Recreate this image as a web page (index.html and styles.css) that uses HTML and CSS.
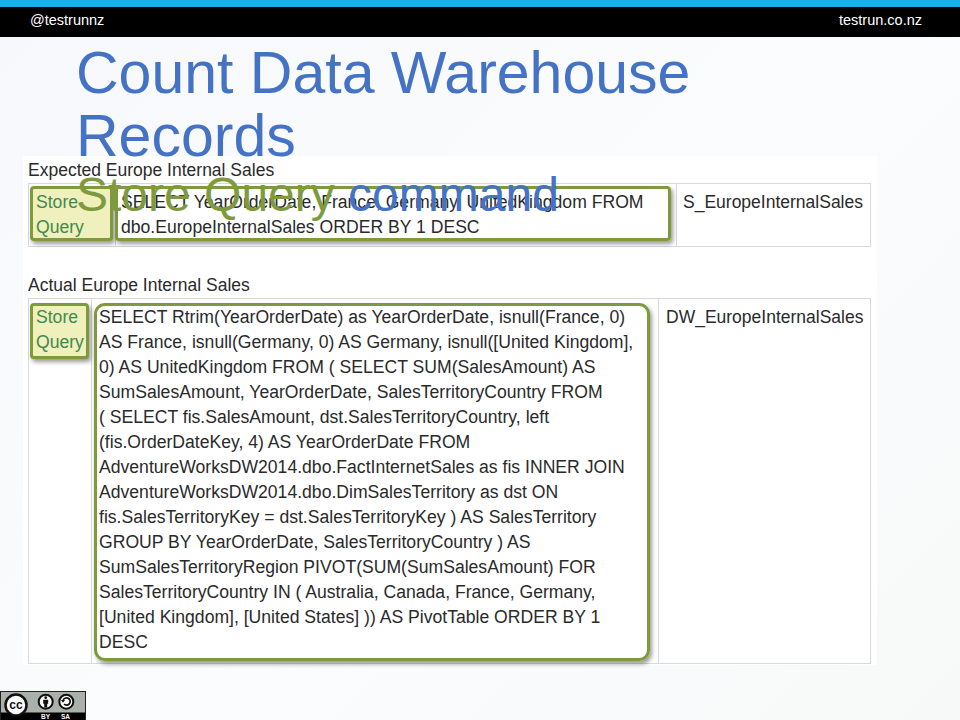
FILE: index.html
```html
<!DOCTYPE html>
<html lang="en">
<head>
<meta charset="utf-8">
<title>Count Data Warehouse Records</title>
<link rel="stylesheet" href="styles.css">
</head>
<body>
<div class="slide">
  <div class="accent"></div>
  <header class="topbar">
    <span>@testrunnz</span>
    <span>testrun.co.nz</span>
  </header>
  <main class="card">
    <p class="caption first">Expected Europe Internal Sales</p>
    <table class="grid expected">
      <tr>
        <td class="c-name"><span class="note"></span><a class="link">Store Query</a></td>
        <td class="c-sql"><span class="mark"></span>SELECT YearOrderDate, France, Germany, UnitedKingdom FROM dbo.EuropeInternalSales ORDER BY 1 DESC</td>
        <td class="c-table">S_EuropeInternalSales</td>
      </tr>
    </table>
    <p class="caption second">Actual Europe Internal Sales</p>
    <table class="grid actual">
      <tr>
        <td class="c-name"><span class="note"></span><a class="link">Store Query</a></td>
        <td class="c-sql"><span class="mark round"></span>SELECT Rtrim(YearOrderDate) as YearOrderDate, isnull(France, 0)<br>AS France, isnull(Germany, 0) AS Germany, isnull([United Kingdom],<br>0) AS UnitedKingdom FROM ( SELECT SUM(SalesAmount) AS<br>SumSalesAmount, YearOrderDate, SalesTerritoryCountry FROM<br>( SELECT fis.SalesAmount, dst.SalesTerritoryCountry, left<br>(fis.OrderDateKey, 4) AS YearOrderDate FROM<br>AdventureWorksDW2014.dbo.FactInternetSales as fis INNER JOIN<br>AdventureWorksDW2014.dbo.DimSalesTerritory as dst ON<br>fis.SalesTerritoryKey = dst.SalesTerritoryKey ) AS SalesTerritory<br>GROUP BY YearOrderDate, SalesTerritoryCountry ) AS<br>SumSalesTerritoryRegion PIVOT(SUM(SumSalesAmount) FOR<br>SalesTerritoryCountry IN ( Australia, Canada, France, Germany,<br>[United Kingdom], [United States] )) AS PivotTable ORDER BY 1<br>DESC</td>
        <td class="c-table">DW_EuropeInternalSales</td>
      </tr>
    </table>
  </main>
  <div class="heading">
    <h1>Count Data Warehouse Records</h1>
    <h2><span class="green">Store Query</span> command</h2>
  </div>
  <footer class="cc" aria-label="Creative Commons BY SA">
    <svg class="cc-art" width="86" height="29" viewBox="0 0 86 29">
      <rect x="0.5" y="0.5" width="85" height="28" fill="#aab1aa" stroke="#222"/>
      <rect x="1" y="21.5" width="84" height="7.5" fill="#000"/>
      <circle cx="16" cy="14" r="10.5" fill="#fff" stroke="#111" stroke-width="2.5"/>
      <text x="16" y="18" text-anchor="middle" class="cc-glyph">cc</text>
      <circle cx="45.7" cy="10.7" r="7" fill="#fff" stroke="#111" stroke-width="2"/>
      <circle cx="45.7" cy="6.7" r="1.4" fill="#111"/>
      <path d="M43.2 8.8h5v4h-1v3.6h-3v-3.6h-1z" fill="#111"/>
      <circle cx="66.3" cy="10.7" r="7" fill="#fff" stroke="#111" stroke-width="2"/>
      <path d="M63 10a3.6 3.6 0 1 1 1 3" fill="none" stroke="#111" stroke-width="1.7"/>
      <path d="M61 9h4l-2 2.8z" fill="#111"/>
      <text x="45.5" y="27.5" text-anchor="middle" class="cc-label">BY</text>
      <text x="65.5" y="27.5" text-anchor="middle" class="cc-label">SA</text>
    </svg>
  </footer>
</div>
</body>
</html>
```
FILE: styles.css
```css
* { box-sizing: border-box; }
html, body { margin: 0; padding: 0; }
body { font-family: "Liberation Sans", Arial, sans-serif; }
.slide {
  position: relative;
  width: 960px;
  height: 720px;
  overflow: hidden;
  background: linear-gradient(135deg, #f6f8fb 0%, #fbfcfd 55%, #f7f8f8 100%);
}
.accent { height: 7px; background: #1aaeee; }
.topbar {
  height: 30px;
  background: #000;
  color: #fff;
  font-size: 14.5px;
  display: flex;
  justify-content: space-between;
  align-items: center;
  padding: 0 38px 4px 30px;
}
.card {
  width: 854px;
  height: 509px;
  margin: 119px 0 0 23px;
  padding: 0 6px 0 5px;
  background: #fff;
  color: #2a2a2a;
  font-size: 17.6px;
  line-height: 25px;
}
.caption { margin: 0; font-size: 17.5px; }
.caption.first { padding-top: 2px; height: 27px; }
.caption.second { padding-top: 1px; height: 26px; margin-top: 25px; }
.grid {
  border-collapse: collapse;
  table-layout: fixed;
  width: 843px;
}
.grid td {
  position: relative;
  vertical-align: top;
  border: 1px solid #d9d9d9;
  padding: 6px 7px;
}
.grid .c-table { font-size: 17.5px; }
.expected { height: 64px; }
.actual { height: 366px; }
.expected .c-name { width: 87px; }
.expected .c-sql { padding-left: 5px; }
.expected .c-table { width: 194px; padding-left: 6px; padding-right: 0; }
.actual .c-name { width: 63px; }
.actual .c-sql { white-space: nowrap; }
.actual .c-table { width: 212px; padding-right: 0; }
.link { color: #3f8a4f; display: block; position: relative; }
.note {
  position: absolute;
  left: 1px;
  top: 2px;
  width: 83px;
  height: 55px;
  background: #eff0bc;
  border: 3px solid #7f9a3e;
  border-radius: 4px;
  box-shadow: 2px 3px 4px rgba(0, 0, 0, .4);
}
.actual .note { width: 59px; height: 56px; top: 4px; }
.mark {
  position: absolute;
  left: -1px;
  top: 2px;
  width: 556px;
  height: 55px;
  border: 3px solid #7f9a3e;
  border-radius: 4px;
  box-shadow: 2px 3px 4px rgba(0, 0, 0, .4);
}
.mark.round {
  left: 2px;
  top: 4px;
  width: 556px;
  height: 358px;
  border-radius: 11px;
}
.heading {
  position: absolute;
  left: 76px;
  top: 42px;
  width: 800px;
}
h1 {
  margin: 0;
  font-size: 59px;
  font-weight: 400;
  line-height: 62.5px;
  color: #4472c4;
  width: 640px;
}
h2 {
  margin: 1px 0 0;
  font-size: 48px;
  font-weight: 400;
  line-height: 54px;
  color: #4472c4;
}
.green { color: #7f9a3e; }
.cc { position: absolute; left: 0; top: 691px; line-height: 0; }
.cc-glyph { font: 700 12px "Liberation Sans", sans-serif; fill: #111; }
.cc-label { font: 700 6.5px "Liberation Sans", sans-serif; fill: #fff; }
```
